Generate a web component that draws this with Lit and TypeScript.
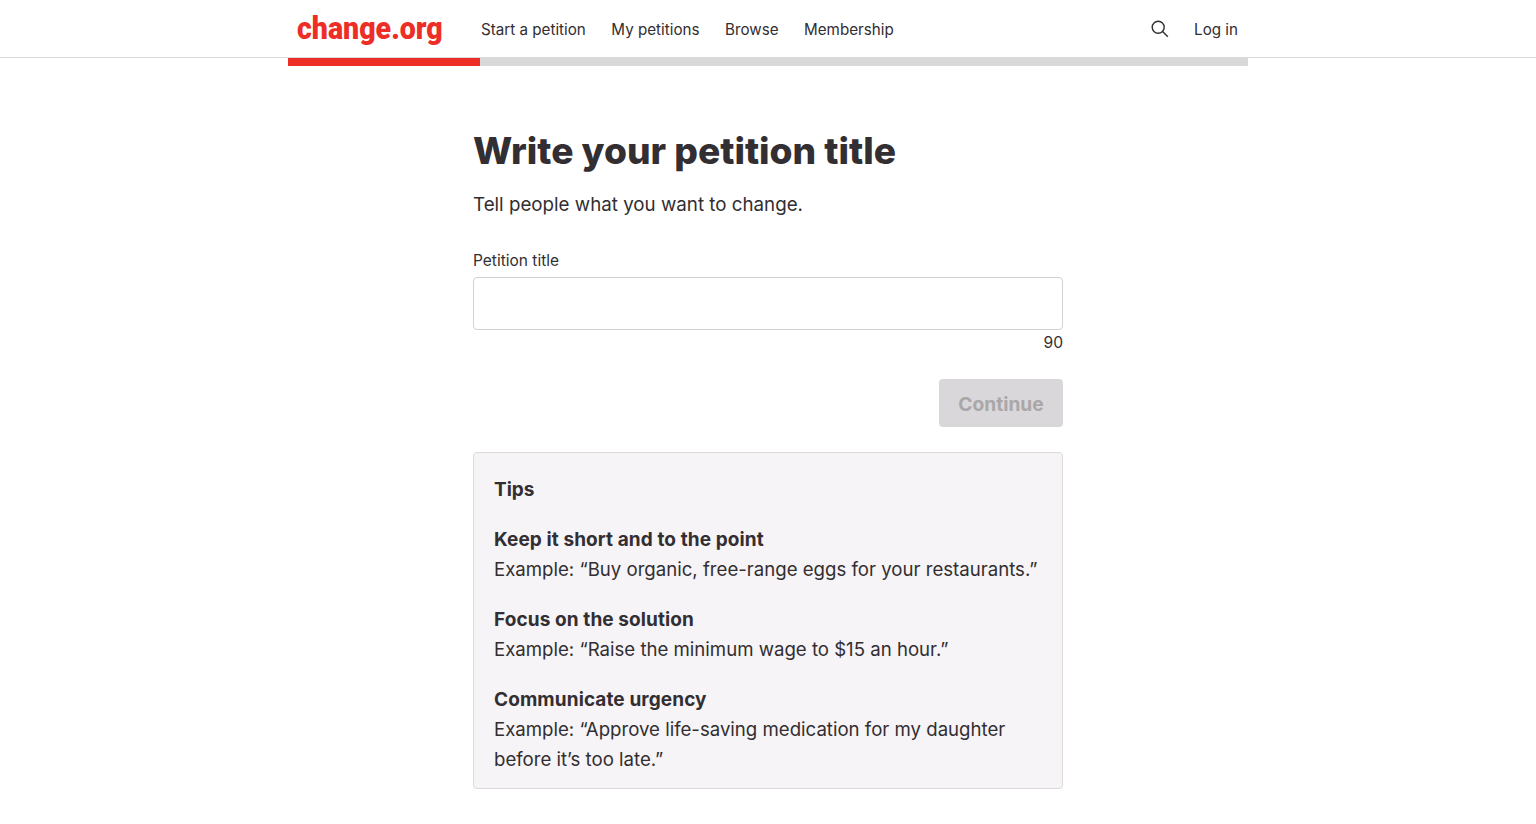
import { LitElement, html, css } from 'lit';
import { customElement } from 'lit/decorators.js';

@customElement('app-root')
export default class AppRoot extends LitElement {
    static styles = css`
    :host{
        display: block;
        min-height: 824px;
        background: #fff;
        color: #322e32;
        font-family: "Inter", "Liberation Sans", sans-serif;
    }
    header{
        height: 57px;
        border-bottom: 1px solid #dcdadb;
    }
    .nav{
        width: 960px;
        height: 57px;
        margin: 0 auto;
        display: flex;
        align-items: center;
        font-size: 15.2px;
    }
    .logo{
        width: 192px;
        padding-left: 9px;
        box-sizing: border-box;
        color: #ed2e26;
        font-family: "Roboto", sans-serif;
        font-size: 31px;
        font-weight: 900;
    }
    .logo span{
        display: inline-block;
        transform: scaleX(.92);
        transform-origin: left center;
    }
    .links{
        display: flex;
        gap: 25.5px;
        flex: 1;
        padding: 1px 0 0 1px;
    }
    .search{
        display: block;
        margin-right: 25px;
    }
    .login{
        margin-right: 10px;
        padding-top: 1px;
    }
    .progress{
        width: 960px;
        height: 8px;
        margin: 0 auto;
        background: #dad9da;
    }
    .progress div{
        height: 100%;
        background: #ed2e26;
    }
    main{
        width: 590px;
        margin: 0 auto;
        padding-top: 60px;
    }
    h1{
        margin: 0;
        font-size: 37.15px;
        line-height: 50px;
        font-weight: 800;
    }
    .sub{
        margin: 15px 0 0;
        font-size: 18.75px;
        line-height: 28px;
    }
    label{
        display: block;
        margin-top: 30px;
        font-size: 15.5px;
        line-height: 24px;
    }
    .field{
        height: 51px;
        margin-top: 4px;
        border: 1px solid #d3d1d2;
        border-radius: 4px;
    }
    .count{
        padding-top: 1px;
        text-align: right;
        font-size: 15.6px;
        line-height: 24px;
    }
    .actions{
        display: flex;
        justify-content: flex-end;
        margin-top: 24px;
    }
    button{
        width: 124px;
        height: 48px;
        padding: 1px 0 0;
        border: 0;
        border-radius: 4px;
        background: #d9d7d9;
        color: #a9a7a8;
        font: 700 19.2px "Inter", "Liberation Sans", sans-serif;
    }
    .tips{
        margin-top: 25px;
        padding: 21px 20px 14px;
        border: 1px solid #dcdadb;
        border-radius: 4px;
        background: #f6f4f7;
        font-size: 18.62px;
        line-height: 30px;
    }
    .tips h2{
        margin: 0 0 19px;
        padding-top: 1px;
        font-size: 19px;
        line-height: 30px;
        font-weight: 700;
    }
    .tip{
        margin-bottom: 20px;
    }
    .tip:last-child{
        margin-bottom: 0;
    }
    .tip b{
        display: block;
        padding-top: 1px;
        font-size: 19px;
        line-height: 29px;
        font-weight: 700;
        letter-spacing: .1px;
    }
    `;

    render() {
        const tips = [
            ['Keep it short and to the point', 'Example: “Buy organic, free-range eggs for your restaurants.”'],
            ['Focus on the solution', 'Example: “Raise the minimum wage to $15 an hour.”'],
            ['Communicate urgency', 'Example: “Approve life-saving medication for my daughter before it’s too late.”'],
        ];
        return html`
          <header>
            <div class="nav">
              <div class="logo"><span>change.org</span></div>
              <div class="links">
                <span>Start a petition</span>
                <span>My petitions</span>
                <span>Browse</span>
                <span>Membership</span>
              </div>
              <svg class="search" width="18" height="18" viewBox="0 0 18 18" fill="none" stroke="#322e32" stroke-width="1.4">
                <circle cx="7.2" cy="7.2" r="6"></circle>
                <path d="M11.6 11.6l5.2 5.2"></path>
              </svg>
              <span class="login">Log in</span>
            </div>
          </header>
          <div class="progress"><div style="width: 20%"></div></div>
          <main>
            <h1>Write your petition title</h1>
            <p class="sub">Tell people what you want to change.</p>
            <label>Petition title</label>
            <div class="field"></div>
            <div class="count">90</div>
            <div class="actions"><button>Continue</button></div>
            <section class="tips">
              <h2>Tips</h2>
              ${tips.map(tip => html`
                <div class="tip"><b>${tip[0]}</b>${tip[1]}</div>
              `)}
            </section>
          </main>
        `;
    }
}
